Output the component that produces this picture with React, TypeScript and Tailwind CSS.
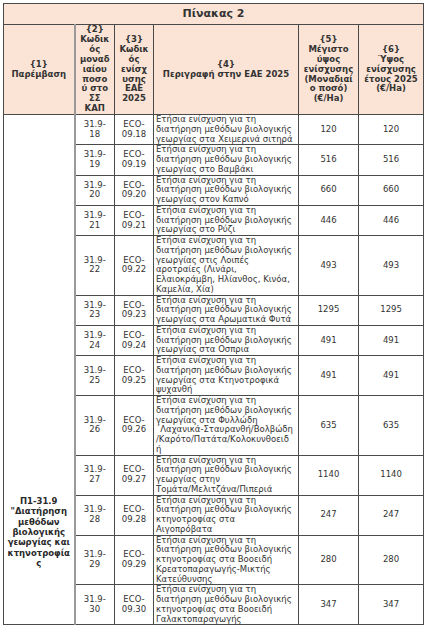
import React from 'react';

type Row = { code: string; eco: string; desc: string[]; max: string; year: string };

const rows: Row[] = [
  { code: '18', eco: '09.18', desc: ['γεωργίας στα Χειμερινά σιτηρά'], max: '120', year: '120' },
  { code: '19', eco: '09.19', desc: ['γεωργίας στο Βαμβάκι'], max: '516', year: '516' },
  { code: '20', eco: '09.20', desc: ['γεωργίας στον Καπνό'], max: '660', year: '660' },
  { code: '21', eco: '09.21', desc: ['γεωργίας στο Ρύζι'], max: '446', year: '446' },
  {
    code: '22',
    eco: '09.22',
    desc: ['γεωργίας στις Λοιπές', 'αροτραίες (Λινάρι,', 'Ελαιοκράμβη, Ηλίανθος, Κινόα,', 'Καμελία, Χία)'],
    max: '493',
    year: '493',
  },
  { code: '23', eco: '09.23', desc: ['γεωργίας στα Αρωματικά Φυτά'], max: '1295', year: '1295' },
  { code: '24', eco: '09.24', desc: ['γεωργίας στα Οσπρια'], max: '491', year: '491' },
  { code: '25', eco: '09.25', desc: ['γεωργίας στα Κτηνοτροφικά', 'ψυχανθή'], max: '491', year: '491' },
  {
    code: '26',
    eco: '09.26',
    desc: ['γεωργίας στα Φυλλώδη', '΄Λαχανικά-Σταυρανθή/Βολβώδη', '/Καρότο/Πατάτα/Κολοκυνθοειδ', 'ή'],
    max: '635',
    year: '635',
  },
  { code: '27', eco: '09.27', desc: ['γεωργίας στην', 'Τομάτα/Μελιτζάνα/Πιπεριά'], max: '1140', year: '1140' },
  { code: '28', eco: '09.28', desc: ['κτηνοτροφίας στα', 'Αιγοπρόβατα'], max: '247', year: '247' },
  {
    code: '29',
    eco: '09.29',
    desc: ['κτηνοτροφίας στα Βοοειδή', 'Κρεατοπαραγωγής-Μικτής', 'Κατεύθυνσης'],
    max: '280',
    year: '280',
  },
  { code: '30', eco: '09.30', desc: ['κτηνοτροφίας στα Βοοειδή', 'Γαλακτοπαραγωγής'], max: '347', year: '347' },
];

const Lines = ({ lines }: { lines: string[] }) => (
  <>
    {lines.map((l, i) => (
      <div key={i}>{l}</div>
    ))}
  </>
);

const cell = 'border border-[#4a4a4a] px-[2px] py-0 align-middle';

export default function App() {
  return (
    <div
      className="h-[626px] overflow-hidden bg-white pl-[3px] pt-[3px] text-[#333]"
      style={{ fontFamily: '"DejaVu Sans", sans-serif' }}
    >
      <table className="w-[420px] table-fixed border-collapse text-[8.5px] leading-[9.75px]">
        <colgroup>
          <col className="w-[71px]" />
          <col className="w-[40px]" />
          <col className="w-[39px]" />
          <col className="w-[145px]" />
          <col className="w-[60px]" />
          <col className="w-[65px]" />
        </colgroup>
        <thead>
          <tr className="h-[21px] bg-[#fbe4d5]">
            <th colSpan={6} className={`${cell} text-center text-[11px] font-bold leading-[14px]`}>
              Πίνακας 2
            </th>
          </tr>
          <tr className="h-[90px] bg-[#fbe4d5] text-center font-bold leading-[9.9px]">
            <th className={`${cell} border-r-2 border-r-[#9a9a9a]`}>
              <Lines lines={['{1}', 'Παρέμβαση']} />
            </th>
            <th className={cell}>
              <Lines lines={['{2}', 'Κωδικ', 'ός', 'μοναδ', 'ιαίου', 'ποσο', 'ύ στο', 'ΣΣ', 'ΚΑΠ']} />
            </th>
            <th className={cell}>
              <Lines lines={['{3}', 'Κωδικ', 'ός', 'ενίσχ', 'υσης', 'ΕΑΕ', '2025']} />
            </th>
            <th className={cell}>
              <Lines lines={['{4}', 'Περιγραφή στην ΕΑΕ 2025']} />
            </th>
            <th className={cell}>
              <Lines lines={['{5}', 'Μέγιστο', 'ύψος', 'ενίσχυσης', '(Μοναδιαί', 'ο ποσό)', '(€/Ha)']} />
            </th>
            <th className={cell}>
              <Lines lines={['{6}', 'Ύψος', 'ενίσχυσης', 'έτους 2025', '(€/Ha)']} />
            </th>
          </tr>
        </thead>
        <tbody>
          {rows.map((r, i) => (
            <tr key={r.code}>
              {i === 0 && (
                <td
                  rowSpan={rows.length}
                  className={`${cell} border-r-2 border-r-[#9a9a9a] !align-top pt-[381px] text-center font-bold leading-[10.3px] text-[#2a2a2a]`}
                >
                  <Lines
                    lines={['Π1-31.9', '"Διατήρηση', 'μεθόδων', 'βιολογικής', 'γεωργίας και', 'κτηνοτροφία', 'ς']}
                  />
                </td>
              )}
              <td className={`${cell} text-center`}>
                <Lines lines={['31.9-', r.code]} />
              </td>
              <td className={`${cell} text-center`}>
                <Lines lines={['ECO-', r.eco]} />
              </td>
              <td className={`${cell} text-left`}>
                <Lines lines={['Ετήσια ενίσχυση για τη', 'διατήρηση μεθόδων βιολογικής', ...r.desc]} />
              </td>
              <td className={`${cell} text-center`}>{r.max}</td>
              <td className={`${cell} text-center`}>{r.year}</td>
            </tr>
          ))}
        </tbody>
      </table>
    </div>
  );
}
